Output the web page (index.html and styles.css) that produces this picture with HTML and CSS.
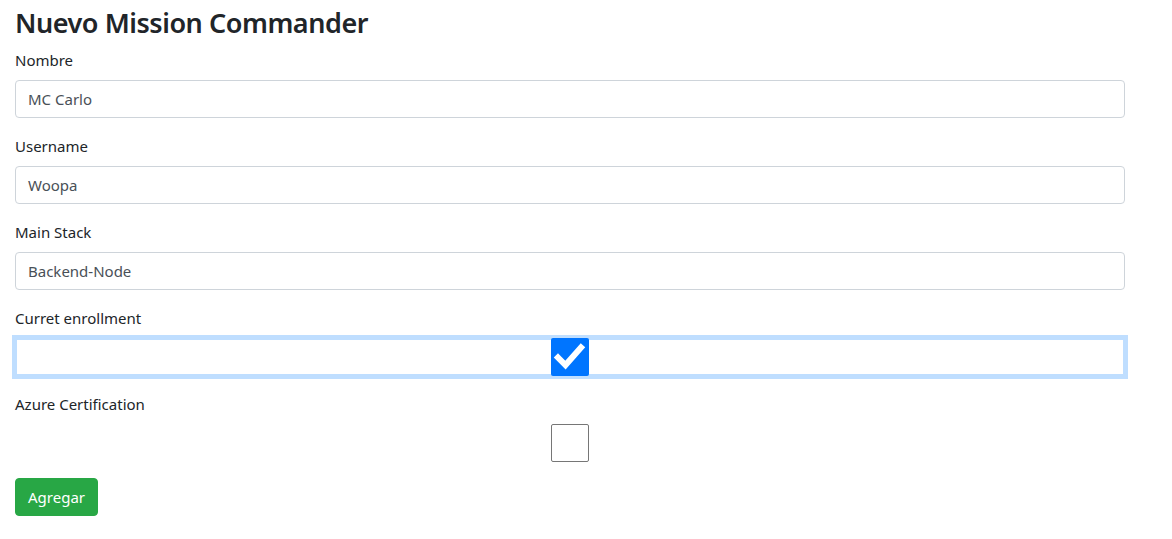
FILE: index.html
```html
<!DOCTYPE html>
<html lang="es">
<head>
<meta charset="utf-8">
<title>Nuevo Mission Commander</title>
<link rel="stylesheet" href="styles.css">
</head>
<body>
<main class="page">
  <h3 class="title">Nuevo Mission Commander</h3>
  <form class="form">
    <div class="group">
      <label class="label">Nombre</label>
      <div class="control">MC Carlo</div>
    </div>
    <div class="group">
      <label class="label">Username</label>
      <div class="control">Woopa</div>
    </div>
    <div class="group">
      <label class="label">Main Stack</label>
      <div class="control">Backend-Node</div>
    </div>
    <div class="group">
      <label class="label">Curret enrollment</label>
      <div class="check-field focused">
        <span class="box checked">
          <svg viewBox="0 0 38 38" width="38" height="38"><polyline points="7,19.5 14.5,27 30,9.5" fill="none" stroke="#fff" stroke-width="6" stroke-linecap="square" stroke-linejoin="miter"/></svg>
        </span>
      </div>
    </div>
    <div class="group">
      <label class="label">Azure Certification</label>
      <div class="check-field">
        <span class="box"></span>
      </div>
    </div>
    <button type="button" class="btn">Agregar</button>
  </form>
</main>
</body>
</html>
```
FILE: styles.css
```css
* { box-sizing: border-box; }
html, body { margin: 0; padding: 0; background: #fff; }
body {
  font-family: "Noto Sans", "Open Sans", sans-serif;
  font-size: 15px;
  line-height: 24px;
  color: #212529;
}
.page {
  width: 1110px;
  margin-left: 15px;
  padding-top: 6px;
}
.title {
  margin: 0 0 8px;
  font-size: 27px;
  line-height: 34px;
  font-weight: 600;
  letter-spacing: -0.45px;
}
.group { margin-bottom: 16px; }
.label {
  display: block;
  margin-bottom: 8px;
  height: 24px;
}
.control {
  height: 38px;
  padding: 6px 12px;
  border: 1px solid #ced4da;
  border-radius: 4px;
  color: #495057;
  line-height: 24px;
}
.check-field {
  height: 38px;
  display: flex;
  justify-content: center;
}
.check-field.focused {
  box-shadow: 0 0 0 3px #bfdeff, inset 0 0 0 2px #bfdeff;
}
.box {
  width: 38px;
  height: 38px;
  border: 1px solid #767676;
  border-radius: 2px;
  background: #fff;
  display: block;
}
.box svg { display: block; }
.box.checked {
  border: none;
  background: #0075ff;
  border-radius: 2px;
}
.btn {
  display: block;
  height: 38px;
  padding: 6px 12px;
  border: 1px solid #28a745;
  border-radius: 4px;
  background: #28a745;
  color: #fff;
  font-family: inherit;
  font-size: 15px;
  line-height: 24px;
  cursor: pointer;
}
```
